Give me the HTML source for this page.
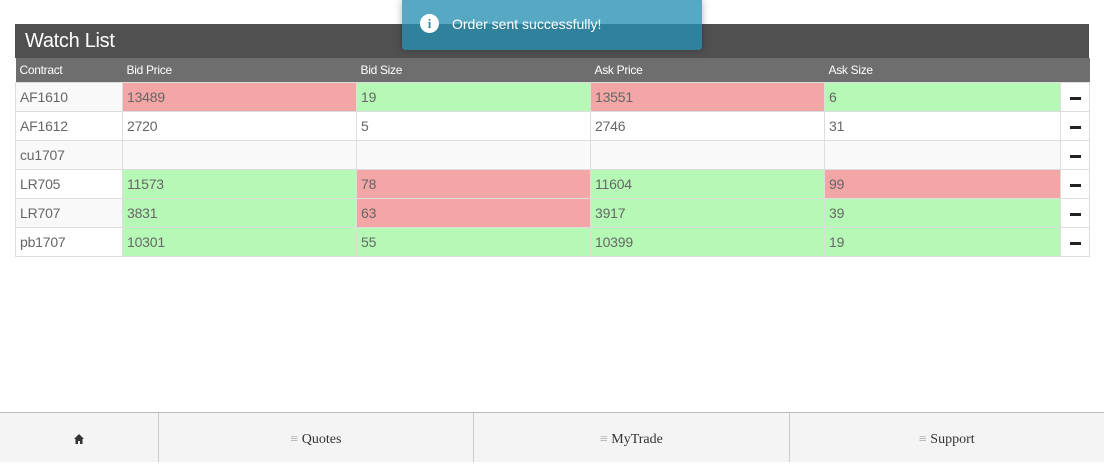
<!DOCTYPE html>
<html><head><style>
body{margin:0;width:1104px;height:461px;background:#fff;font-family:"Liberation Sans",sans-serif;position:relative;overflow:hidden}
.title{position:absolute;left:15px;top:24px;width:1074px;height:34px;background:#505050;color:#fff;font-size:20px;line-height:34px;text-indent:10px;letter-spacing:-0.3px}
table{position:absolute;left:15px;top:58px;border-collapse:collapse;width:1074px;table-layout:fixed}
th{background:#6e6e6e;color:#fff;font-weight:normal;font-size:12px;text-align:left;height:24px;padding:0 0 0 4px;letter-spacing:-0.3px}
td{height:28px;border:1px solid #ddd;padding:0 0 0 4px;font-size:14px;color:#666;letter-spacing:-0.2px}
tr:nth-child(even) td{background:#f9f9f9}
tr:nth-child(odd) td{background:#fff}
tr td.r{background:#f2a6a6}
tr td.g{background:#b6f9b6}
td.m{text-align:center;padding:0;background:#fff!important}
.m span{display:inline-block;width:11px;height:3px;background:#222;vertical-align:middle}
.toast{position:absolute;left:402px;top:0;width:300px;height:50px;background:rgba(40,145,178,0.78);border-radius:0 0 4px 4px;box-shadow:0 0 8px rgba(0,0,0,.3);color:#fff;font-size:14px;line-height:48px}
.toast .ic{position:absolute;left:18px;top:14px;width:19px;height:19px;border-radius:50%;background:#fff;color:#3a8aa0;font-size:13px;font-weight:bold;text-align:center;line-height:19px;font-family:"Liberation Serif",serif}
.toast .t{position:absolute;left:50px;top:0}
.foot{position:absolute;left:0;top:412px;width:1104px;height:49px;border-top:1px solid #bbb;background:#f4f4f4;display:flex;font-family:"Liberation Serif",serif;font-size:14px;color:#333}
.foot div{height:49px;line-height:54px;text-align:center;border-left:1px solid #ccc}
.foot div:first-child{border-left:none}
.foot .b{color:#aaa}
</style></head><body>
<div class="title">Watch List</div>
<table>
<colgroup><col style="width:107px"><col style="width:234px"><col style="width:234px"><col style="width:234px"><col style="width:236px"><col style="width:29px"></colgroup>
<tr><th>Contract</th><th>Bid Price</th><th>Bid Size</th><th>Ask Price</th><th>Ask Size</th><th></th></tr>
<tr><td>AF1610</td><td class="r">13489</td><td class="g">19</td><td class="r">13551</td><td class="g">6</td><td class="m"><span></span></td></tr>
<tr><td>AF1612</td><td>2720</td><td>5</td><td>2746</td><td>31</td><td class="m"><span></span></td></tr>
<tr><td>cu1707</td><td></td><td></td><td></td><td></td><td class="m"><span></span></td></tr>
<tr><td>LR705</td><td class="g">11573</td><td class="r">78</td><td class="g">11604</td><td class="r">99</td><td class="m"><span></span></td></tr>
<tr><td>LR707</td><td class="g">3831</td><td class="r">63</td><td class="g">3917</td><td class="g">39</td><td class="m"><span></span></td></tr>
<tr><td>pb1707</td><td class="g">10301</td><td class="g">55</td><td class="g">10399</td><td class="g">19</td><td class="m"><span></span></td></tr>
</table>
<div class="toast"><div class="ic">i</div><div class="t">Order sent successfully!</div></div>
<div class="foot">
<div style="width:158px"><svg width="10" height="10" viewBox="0 0 10 10" style="vertical-align:-1px"><path d="M5 0L0 5h1.5v5h2.5V7h2v3h2.5V5H10z" fill="#333"/></svg></div>
<div style="width:315px"><span class="b">≡</span> Quotes</div>
<div style="width:315px"><span class="b">≡</span> MyTrade</div>
<div style="width:315px"><span class="b">≡</span> Support</div>
</div>
</body></html>
